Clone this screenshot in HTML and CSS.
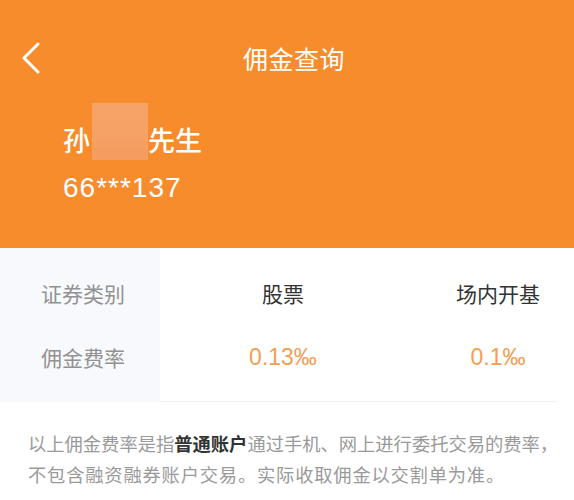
FILE: index.html
```html
<!DOCTYPE html>
<html lang="zh-CN">
<head>
<meta charset="utf-8">
<title>佣金查询</title>
<link rel="stylesheet" href="styles.css">
</head>
<body>
<div class="page">
  <header class="header">
    <div class="nav">
      <div class="nav-left">
        <svg class="back" width="22" height="34" viewBox="0 0 22 34" aria-hidden="true">
          <path d="M18 3 L4 17 L18 31" fill="none" stroke="#fff" stroke-width="3" stroke-linecap="round" stroke-linejoin="round"/>
        </svg>
      </div>
      <div class="nav-title">佣金查询</div>
      <div class="nav-right"></div>
    </div>
    <div class="user">
      <div class="name-row">
        <span class="name">孙</span><span class="mask"></span><span class="name">先生</span>
      </div>
      <div class="account">66***137</div>
    </div>
  </header>

  <section class="table">
    <div class="col col-label">
      <div class="cell label">证券类别</div>
      <div class="cell label">佣金费率</div>
    </div>
    <div class="data">
      <div class="col col-stock">
        <div class="cell head">股票</div>
        <div class="cell rate">0.13‰</div>
      </div>
      <div class="col col-fund">
        <div class="cell head">场内开基</div>
        <div class="cell rate">0.1‰</div>
      </div>
    </div>
  </section>

  <p class="note">以上佣金费率是指<strong>普通账户</strong>通过手机、网上进行委托交易的费率，<br><span class="note-line2">不包含融资融券账户交易。实际收取佣金以交割单为准。</span></p>
</div>
</body>
</html>
```

FILE: styles.css
```css
* { box-sizing: border-box; }
html, body { margin: 0; padding: 0; background: #fff; }
body {
  font-family: "Noto Sans CJK SC", "Noto Sans", sans-serif;
  width: 574px;
}
.header {
  background: #f68c2c;
  height: 248px;
  color: #fff;
  padding-top: 18px;
}
.nav {
  height: 80px;
  display: grid;
  grid-template-columns: 1fr auto 1fr;
  align-items: center;
}
.nav-left { padding-left: 20px; display: flex; align-items: center; }
.back { display: block; }
.nav-title {
  font-size: 25px;
  line-height: 40px;
  letter-spacing: 0.5px;
  padding-left: 14px;
}
.user { padding-left: 63px; margin-top: 22px; }
.name-row {
  height: 40px;
  display: flex;
  align-items: center;
}
.name {
  font-size: 27px;
  line-height: 40px;
  font-weight: 500;
}
.mask {
  width: 56px;
  height: 57px;
  margin-bottom: 17px;
  margin-left: 2px;
  background: linear-gradient(180deg, #f7a468 0%, #f6a065 60%, #f59c5f 100%);
}
.account {
  margin-top: 10px;
  font-family: "Liberation Sans", Arial, sans-serif;
  font-size: 28px;
  letter-spacing: 1px;
  line-height: 36px;
}
.table {
  display: flex;
}
.col {
  padding: 13px 0 12px;
}
.col-label {
  width: 160px;
  background: #f8f9fc;
  padding-left: 41px;
}
.data {
  display: flex;
  width: 397px;
  border-bottom: 1px solid #f2f2f2;
}
.col-stock { width: 246px; text-align: center; }
.col-fund { width: 151px; padding-left: 33px; text-align: center; }
.cell {
  height: 64px;
  display: flex;
  align-items: center;
  justify-content: center;
  white-space: nowrap;
}
.col-label .cell { justify-content: flex-start; }
.label { font-size: 21px; color: #929292; }
.head { font-size: 21px; color: #333; }
.rate {
  font-family: "Liberation Sans", Arial, sans-serif;
  font-size: 23px;
  color: #f1a053;
}
.note {
  margin: 0;
  padding: 26px 0 0 28px;
  font-size: 18.3px;
  line-height: 31px;
  color: #9a9a9a;
  white-space: nowrap;
}
.note strong { color: #333; font-weight: 700; }
.note-line2 { letter-spacing: 0.8px; }
```
